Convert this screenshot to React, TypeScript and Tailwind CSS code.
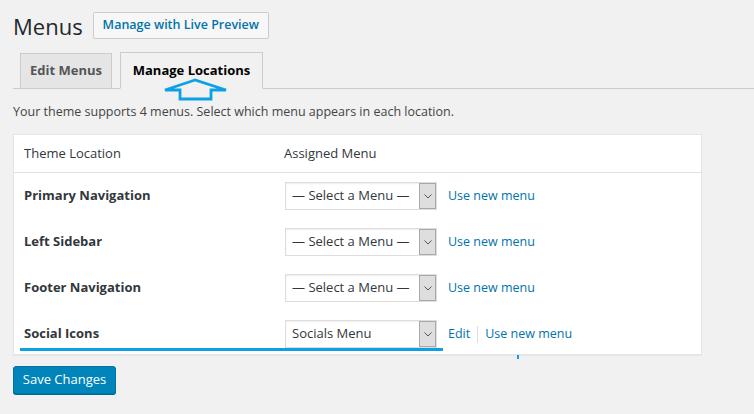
import React from "react";

function Chevron() {
  return (
    <svg width="8" height="5" viewBox="0 0 8 5" fill="none">
      <path d="M0.5 0.5 L4 4 L7.5 0.5" stroke="#555" strokeWidth="1" />
    </svg>
  );
}

function Select({ label }: { label: string }) {
  return (
    <div className="flex h-[28px] w-[152px] items-stretch border border-[#ddd] bg-white shadow-[inset_0_1px_2px_rgba(0,0,0,0.07)]">
      <div className="flex flex-1 items-center pl-[6px] text-[13px] text-[#32373c]">{label}</div>
      <div className="flex w-[17px] items-center justify-center border border-[#a9a9a9] bg-[#dedede]">
        <Chevron />
      </div>
    </div>
  );
}

const rows = [
  { name: "Primary Navigation", value: "— Select a Menu —", edit: false, h: "h-[46px]" },
  { name: "Left Sidebar", value: "— Select a Menu —", edit: false, h: "h-[46px]" },
  { name: "Footer Navigation", value: "— Select a Menu —", edit: false, h: "h-[46px]" },
  { name: "Social Icons", value: "Socials Menu", edit: true, h: "h-[43px] pt-[3px]" },
];

export default function App() {
  return (
    <div className="relative min-h-screen bg-[#f1f1f1] font-['Open_Sans',sans-serif] text-[13px] text-[#444]">
      <div className="pl-[13px] pt-[12px]">
        <div className="flex items-center gap-[10px]">
          <h1 className="text-[22px] leading-[26px] font-normal text-[#23282d]">Menus</h1>
          <button className="h-[27px] rounded-[2px] border border-[#ccc] bg-[#f7f7f7] px-[9px] text-[12.5px] font-semibold text-[#0073aa]">
            Manage with Live Preview
          </button>
        </div>

        <div className="mt-[13px] flex items-end gap-[8px] border-b border-[#ccc] pl-[7px]">
          <div className="-mb-px flex h-[36px] w-[92px] items-center justify-center border border-[#ccc] bg-[#e5e5e5] text-[13px] font-bold text-[#555]">
            Edit Menus
          </div>
          <div className="-mb-px flex h-[37px] w-[143px] items-center justify-center border border-b-[#f1f1f1] border-[#ccc] bg-[#f1f1f1] text-[13px] font-bold text-black">
            Manage Locations
          </div>
        </div>

        <p className="mt-[13px] text-[12.5px] leading-[20px] text-[#444]">
          Your theme supports 4 menus. Select which menu appears in each location.
        </p>

        <div className="mt-[12px] w-[689px] border border-[#e5e5e5] bg-white shadow-[0_1px_1px_rgba(0,0,0,0.04)]">
          <div className="flex h-[38px] items-center border-b border-[#e1e1e1] text-[13px] text-[#32373c]">
            <div className="w-[270px] pl-[10px]">Theme Location</div>
            <div>Assigned Menu</div>
          </div>
          {rows.map((r) => (
            <div key={r.name} className={`flex items-center ${r.h}`}>
              <div className="w-[271px] pl-[10px] text-[13px] font-bold text-[#32373c]">{r.name}</div>
              <Select label={r.value} />
              <div className="ml-[11px] flex items-center text-[12.5px] text-[#0073aa]">
                {r.edit && (
                  <>
                    <span>Edit</span>
                    <span className="mx-[7px] h-[17px] w-px bg-[#ddd]" />
                  </>
                )}
                <span>Use new menu</span>
              </div>
            </div>
          ))}
        </div>

        <button className="mt-[11px] h-[28px] w-[103px] rounded-[3px] border border-[#0073aa] bg-[#0085ba] text-[13px] text-white shadow-[0_1px_0_#006799]">
          Save Changes
        </button>
      </div>

      <svg className="absolute left-[160px] top-[77px]" width="72" height="26" viewBox="0 0 72 26" fill="none">
        <path d="M35 3 L5 13 L20 13 L20 22 L51 22 L51 13 L66 13 Z" stroke="#0ea0e4" strokeWidth="2.8" strokeLinejoin="miter" />
      </svg>
      <div className="absolute left-[20px] top-[348px] h-[3px] w-[423px] bg-[#0ea0e4]" />
      <div className="absolute left-[517px] top-[355px] h-[4px] w-[2px] bg-[#0ea0e4]" />
    </div>
  );
}
